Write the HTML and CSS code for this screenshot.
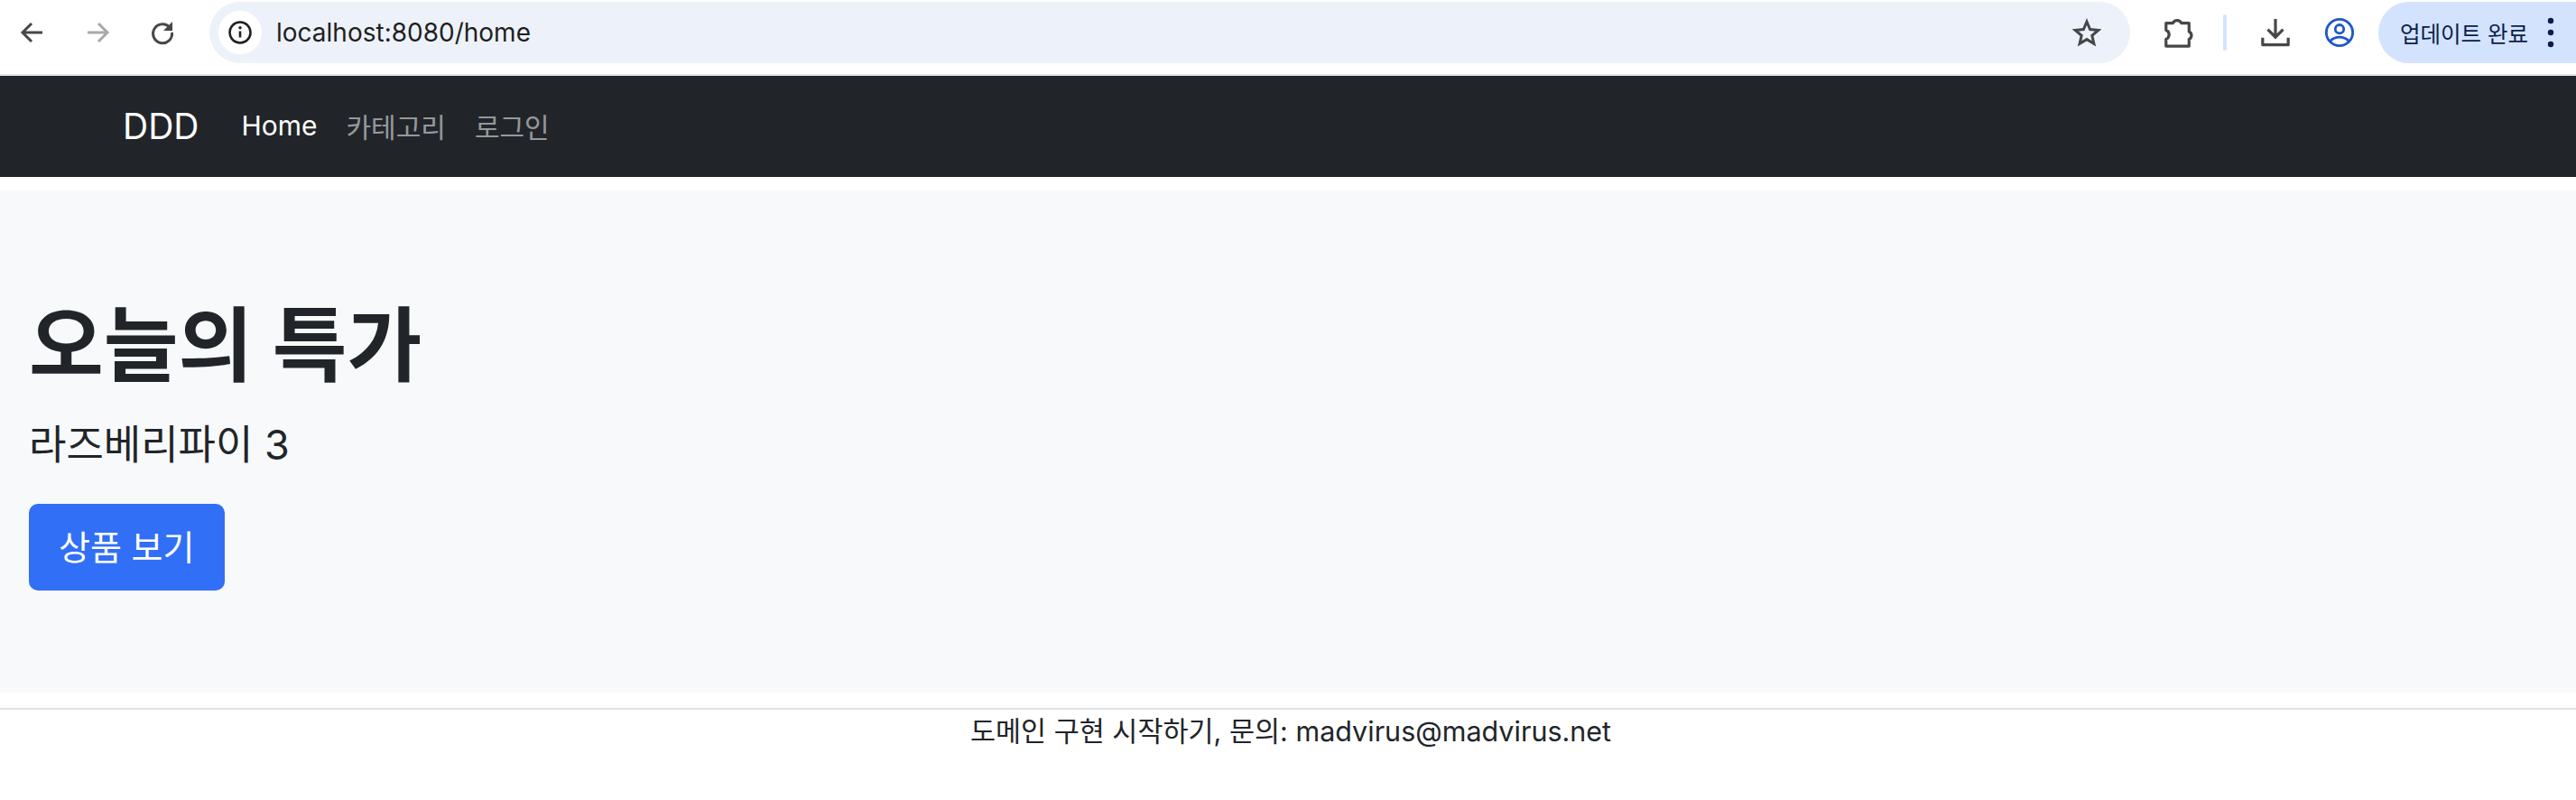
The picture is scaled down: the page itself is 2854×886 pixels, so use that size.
FILE: index.html
```html
<!DOCTYPE html>
<html lang="ko">
<head>
<meta charset="utf-8">
<title>DDD</title>
<link rel="stylesheet" href="styles.css">
</head>
<body>
<div class="chrome">
  <div class="nav-buttons">
    <svg class="ic" viewBox="0 0 32 32"><path d="M27 16H6M15 6 5 16l10 10" fill="none" stroke="#474747" stroke-width="3"/></svg>
    <svg class="ic" viewBox="0 0 32 32"><path d="M5 16h21M17 6l10 10-10 10" fill="none" stroke="#a9a9a9" stroke-width="3"/></svg>
    <svg class="ic" viewBox="0 0 32 32"><path d="M24.500 11A10.500 10.500 0 1 0 26.500 16" fill="none" stroke="#474747" stroke-width="3"/><path d="M27 4v10H17z" fill="#474747"/></svg>
  </div>
  <div class="omnibox">
    <div class="info-chip">
      <svg class="info" viewBox="0 0 28 28"><circle cx="14" cy="14" r="11.500" fill="none" stroke="#1f1f1f" stroke-width="2.600"/><path d="M14 12.500v7" stroke="#1f1f1f" stroke-width="2.600"/><circle cx="14" cy="8.800" r="1.700" fill="#1f1f1f"/></svg>
    </div>
    <span class="url">localhost:8080/home</span>
    <svg class="star" viewBox="0 0 32 32"><path d="M16 4l3.600 8.600 9.200.8-7 6 2.100 9L16 23.600 8.100 28.400l2.100-9-7-6 9.200-.8z" fill="none" stroke="#474747" stroke-width="3" stroke-linejoin="miter"/></svg>
  </div>
  <svg class="ic ext" viewBox="0 0 36 38"><path d="M4 8h8a5.500 5.500 0 0 1 10 0h9v10a5 5 0 0 1 0 9v8H4v-8a6 6 0 0 0 0-11z" fill="none" stroke="#474747" stroke-width="3.400" stroke-linejoin="round"/></svg>
  <div class="sep"></div>
  <svg class="ic dl" viewBox="0 0 36 36"><path d="M18 2v21M9 14.500l9 9 9-9" fill="none" stroke="#474747" stroke-width="3.400"/><path d="M3 24v8.500h30V24" fill="none" stroke="#474747" stroke-width="3.400" stroke-linejoin="round"/></svg>
  <svg class="ic prof" viewBox="0 0 36 36"><circle cx="18" cy="18" r="15.500" fill="none" stroke="#1f58c7" stroke-width="3"/><circle cx="18" cy="14" r="5" fill="none" stroke="#1f58c7" stroke-width="3"/><path d="M7 28c6-6 16-6 22 0" fill="none" stroke="#1f58c7" stroke-width="3"/></svg>
  <div class="update">
    <span class="update-text">업데이트 완료</span>
    <svg class="kebab" viewBox="0 0 8 36"><circle cx="4" cy="5" r="3.200"/><circle cx="4" cy="18" r="3.200"/><circle cx="4" cy="31" r="3.200"/></svg>
  </div>
</div>
<nav class="navbar">
  <a class="brand">DDD</a>
  <a class="nav-link active">Home</a>
  <a class="nav-link">카테고리</a>
  <a class="nav-link">로그인</a>
</nav>
<section class="hero">
  <h1>오늘의 특가</h1>
  <p class="lead">라즈베리파이 3</p>
  <a class="btn">상품 보기</a>
</section>
<hr class="rule">
<footer class="footer">도메인 구현 시작하기, 문의: madvirus@madvirus.net</footer>
</body>
</html>
```
FILE: styles.css
```css
html, body { margin: 0; padding: 0; background: #fff; overflow: hidden; }
body { font-family: Inter, "Liberation Sans", "Noto Sans CJK KR", sans-serif; color: #212529; height: 886px; }

.chrome { height: 84px; box-sizing: border-box; padding-bottom: 10px; display: flex; align-items: center; border-bottom: 2px solid #e4e6e1; background: #fff; }
.nav-buttons { display: flex; gap: 40px; padding-left: 20px; width: 232px; box-sizing: border-box; flex: none; }
.ic { width: 32px; height: 32px; display: block; flex: none; }
.omnibox { width: 2128px; height: 68px; border-radius: 34px; background: #edf2fa; display: flex; align-items: center; flex: none; padding: 0 32px 0 10px; box-sizing: border-box; }
.info-chip { width: 48px; height: 48px; border-radius: 50%; background: #fff; display: flex; align-items: center; justify-content: center; flex: none; }
.info { width: 28px; height: 28px; }
.url { font-size: 28px; color: #1f1f1f; margin-left: 16px; flex: 1; }
.star { width: 32px; height: 32px; flex: none; }
.ext { width: 34px; height: 36px; margin-left: 36px; }
.sep { width: 4px; height: 40px; border-radius: 2px; background: #d3e3fd; margin-left: 33px; flex: none; }
.dl { width: 34px; height: 34px; margin-left: 37px; }
.prof { width: 34px; height: 34px; margin-left: 37px; }
.update { margin-left: 26px; flex: 1; height: 68px; border-radius: 34px 0 0 34px; background: #d3e3fd; display: flex; align-items: center; padding-left: 24px; min-width: 0; }
.update-text { font-size: 24.500px; color: #0a1d4d; white-space: nowrap; }
.kebab { width: 8px; height: 36px; margin-left: 21px; fill: #0a1d4d; flex: none; }

.navbar { height: 112px; padding: 0 0 2px 136px; box-sizing: border-box; background: #212529; display: flex; align-items: center; }
.brand { font-size: 39px; color: #fff; margin-right: 47px; }
.nav-link { font-size: 30px; color: rgba(255,255,255,.55); margin-right: 32px; }
.nav-link.active { color: #fff; }

.hero { margin-top: 15px; height: 556px; box-sizing: border-box; background: #f8f9fa; padding: 118px 32px 0; }
h1 { margin: 0; font-size: 90px; font-weight: 700; line-height: 1.2; }
.lead { margin: 22px 0 0; font-size: 45px; line-height: 1.5; font-weight: 400; }
.btn { display: inline-block; margin-top: 31.500px; height: 96px; line-height: 96px; padding: 0 33px; background: #316ff6; color: #fff; font-size: 38px; border-radius: 10px; }

.rule { margin: 17px 0 0; border: 0; height: 2px; background: #dee2e6; }
.footer { text-align: center; font-size: 30.500px; line-height: 48px; color: #212529; padding-left: 6px; }
```
